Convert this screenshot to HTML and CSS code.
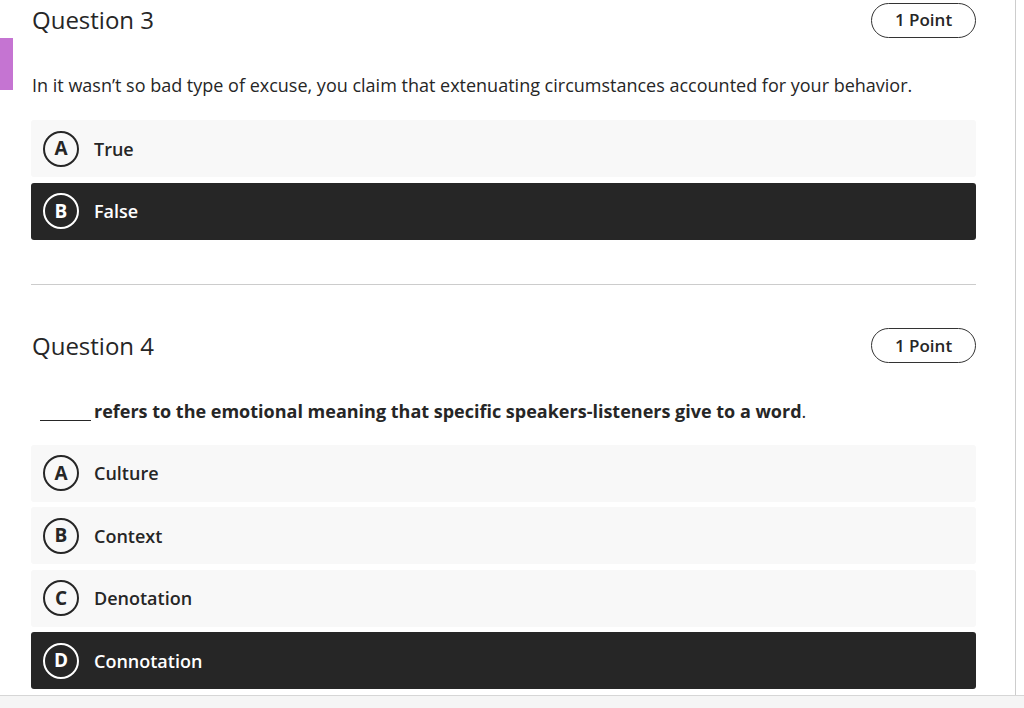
FILE: index.html
```html
<!DOCTYPE html>
<html>
<head>
<meta charset="utf-8">
<link rel="stylesheet" href="styles.css">
</head>
<body>
<div class="page">
  <div class="frame">
    <section class="question q3">
      <div class="gutter"><div class="marker"></div></div>
      <div class="content">
        <div class="qhead">
          <h2 class="qtitle">Question 3</h2>
          <span class="points">1 Point</span>
        </div>
        <p class="qtext">In it wasn’t so bad type of excuse, you claim that extenuating circumstances accounted for your behavior.</p>
        <div class="options">
          <div class="option"><span class="letter">A</span><span class="label">True</span></div>
          <div class="option selected"><span class="letter">B</span><span class="label">False</span></div>
        </div>
        <hr class="divider">
      </div>
    </section>
    <section class="question q4">
      <div class="gutter"></div>
      <div class="content">
        <div class="qhead">
          <h2 class="qtitle">Question 4</h2>
          <span class="points">1 Point</span>
        </div>
        <p class="qtext q4text"><span class="blank"></span><b>refers to the emotional meaning that specific speakers-listeners give to a word</b>.</p>
        <div class="options">
          <div class="option"><span class="letter">A</span><span class="label">Culture</span></div>
          <div class="option"><span class="letter">B</span><span class="label">Context</span></div>
          <div class="option"><span class="letter">C</span><span class="label">Denotation</span></div>
          <div class="option selected"><span class="letter">D</span><span class="label">Connotation</span></div>
        </div>
      </div>
    </section>
  </div>
  <div class="bottombar"></div>
</div>
</body>
</html>
```
FILE: styles.css
```css
* { box-sizing: border-box; }
html, body { margin: 0; padding: 0; background: #fff; }
body {
  font-family: "Open Sans", "Noto Sans", sans-serif;
  color: #262626;
  width: 1024px;
  height: 708px;
  overflow: hidden;
}
.page { display: flex; flex-direction: column; height: 708px; }
.frame {
  width: 1016px;
  height: 695px;
  border-right: 1px solid #cdcdcd;
  overflow: hidden;
}
.question { display: flex; }
.gutter { width: 31px; flex: none; }
.marker {
  width: 13px;
  height: 52px;
  margin-top: 38px;
  background: #c574d2;
}
.content { width: 945px; }
.q3 .content { padding-top: 3px; }
.qhead {
  display: flex;
  justify-content: space-between;
  align-items: center;
  height: 34px;
}
.qtitle {
  margin: 0 0 0 1px;
  font-size: 24px;
  font-weight: 500;
  line-height: 28px;
}
.points {
  width: 105px;
  height: 35px;
  border: 1.5px solid #333;
  border-radius: 18px;
  display: flex;
  align-items: center;
  justify-content: center;
  font-size: 17px;
  font-weight: 600;
  line-height: 20px;
}
.qtext {
  margin: 36px 0 0 1px;
  font-size: 18px;
  line-height: 24px;
}
.q3 .options { margin-top: 23px; }
.options { display: flex; flex-direction: column; gap: 5.5px; }
.option {
  height: 57px;
  background: #f8f8f8;
  border-radius: 3px;
  display: flex;
  align-items: center;
  padding-left: 12px;
}
.option.selected { background: #262626; color: #fff; }
.letter {
  width: 36px;
  height: 36px;
  border: 2px solid #262626;
  border-radius: 50%;
  display: flex;
  align-items: center;
  justify-content: center;
  font-size: 19px;
  font-weight: 700;
  line-height: 1;
  flex: none;
}
.selected .letter { border-color: #fff; }
.label {
  margin-left: 15px;
  font-size: 18px;
  font-weight: 600;
  line-height: 24px;
}
.divider {
  margin: 44px 0 0 0;
  border: 0;
  border-top: 1px solid #cccccc;
  height: 0;
}
.q4 .content { padding-top: 42px; }
.q4 .qhead { height: 38px; }
.q4text { margin-top: 34px; }
.q4text b { font-weight: 700; }
.blank {
  display: inline-block;
  width: 51px;
  height: 0;
  border-bottom: 1.5px solid #262626;
  margin: 0 3px 0 8px;
  vertical-align: -3px;
}
.q4 .options { margin-top: 22px; }
.bottombar {
  flex: 1;
  background: #f5f5f5;
  border-top: 1px solid #d6d6d6;
}
```
